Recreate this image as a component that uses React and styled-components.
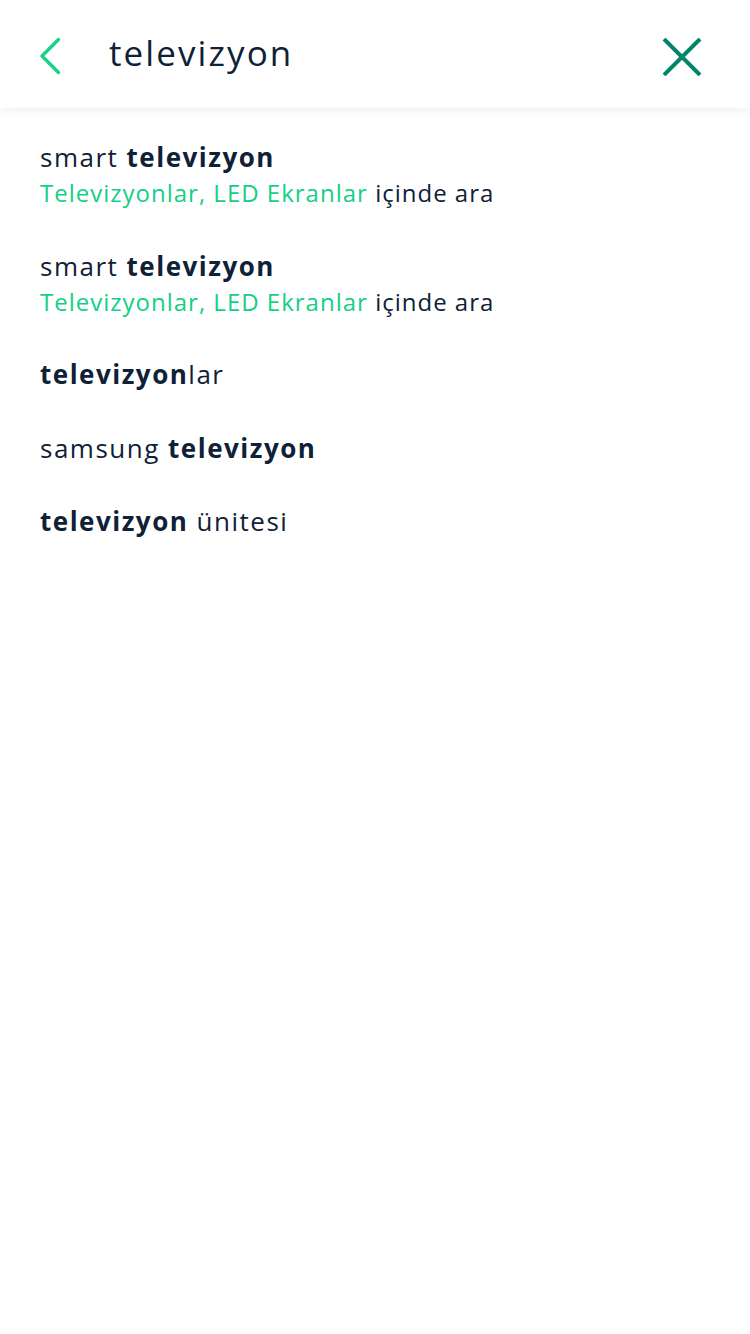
import styled, { createGlobalStyle } from "styled-components";

const Global = createGlobalStyle`
  html, body {
    margin: 0;
    padding: 0;
    background: #ffffff;
  }
  body {
    font-family: "Open Sans", "Noto Sans", sans-serif;
    color: #0f2137;
  }
`;

const Page = styled.div`
  width: 750px;
  min-height: 1334px;
  background: #ffffff;
`;

const Header = styled.div`
  height: 108px;
  display: flex;
  align-items: center;
  padding: 0 48px 0 39px;
  box-shadow: 0 2px 10px rgba(0, 0, 0, 0.07);
  position: relative;
  z-index: 1;
`;

const IconButton = styled.button`
  border: 0;
  background: none;
  padding: 0;
  margin-top: ${(p) => p.$shift || 0}px;
  display: flex;
  align-items: center;
  justify-content: center;
  cursor: pointer;
`;

const Query = styled.div`
  flex: 1;
  margin-left: 48px;
  font-size: 35px;
  letter-spacing: 2.1px;
  color: #0f2137;
  margin-top: -4px;
`;

const List = styled.div`
  padding: 13px 40px 0;
`;

const Row = styled.div`
  padding: 19px 0 19.5px;
`;

const Line = styled.div`
  font-size: ${(p) => (p.$small ? "24px" : "26px")};
  letter-spacing: ${(p) => (p.$small ? "1px" : "1.5px")};
  line-height: 35px;
  color: #0f2137;
  white-space: nowrap;
`;

const Strong = styled.b`
  font-weight: 700;
`;

const Category = styled.span`
  color: #14cf85;
`;

const Back = () => (
  <svg width="22" height="38" viewBox="0 0 22 38" fill="none">
    <path
      d="M19.5 2.5 L3 19 L19.5 35.5"
      stroke="#18d486"
      strokeWidth="3.5"
      strokeLinecap="round"
      strokeLinejoin="round"
    />
  </svg>
);

const Close = () => (
  <svg width="40" height="38" viewBox="0 0 40 38" fill="none">
    <path d="M2 1 L38 37 M38 1 L2 37" stroke="#00866a" strokeWidth="4" />
  </svg>
);

const rows = [
  { text: [["smart "], ["televizyon", true]], cat: "Televizyonlar, LED Ekranlar" },
  { text: [["smart "], ["televizyon", true]], cat: "Televizyonlar, LED Ekranlar" },
  { text: [["televizyon", true], ["lar"]] },
  { text: [["samsung "], ["televizyon", true]] },
  { text: [["televizyon", true], [" ünitesi"]] },
];

export default function App() {
  return (
    <Page>
      <Global />
      <Header>
        <IconButton $shift={3}>
          <Back />
        </IconButton>
        <Query>televizyon</Query>
        <IconButton $shift={6}>
          <Close />
        </IconButton>
      </Header>
      <List>
        {rows.map((r, i) => (
          <Row key={i}>
            <Line>
              {r.text.map(([t, b], j) =>
                b ? <Strong key={j}>{t}</Strong> : <span key={j}>{t}</span>
              )}
            </Line>
            {r.cat && (
              <Line $small>
                <Category>{r.cat}</Category> içinde ara
              </Line>
            )}
          </Row>
        ))}
      </List>
    </Page>
  );
}
